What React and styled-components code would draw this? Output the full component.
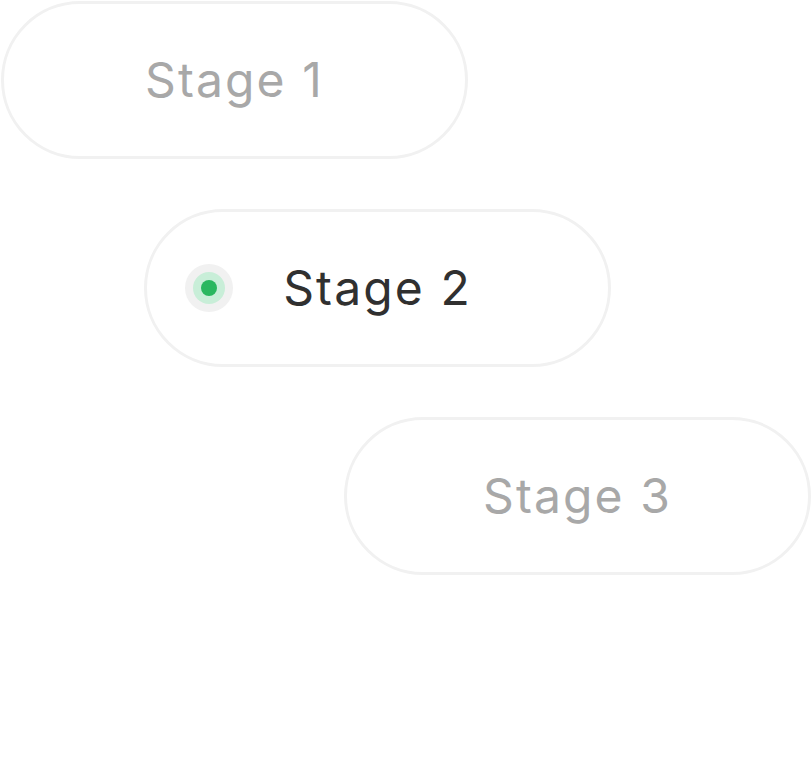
import React from 'react';
import styled, { createGlobalStyle } from 'styled-components';

const GlobalStyle = createGlobalStyle`
  body {
    margin: 0;
    background: #ffffff;
    font-family: Inter, "Liberation Sans", sans-serif;
  }
`

const StageList = styled.div`
  display: flex;
  flex-direction: column;
  gap: 50px;
  padding-top: 1px;
`

const Pill = styled.div`
  position: relative;
  box-sizing: border-box;
  width: 467px;
  height: 158px;
  margin-left: ${props => props.offset}px;
  border: 3px solid #f1f1f1;
  border-radius: 79px;
  display: flex;
  align-items: center;
  justify-content: center;
`

const Label = styled.span`
  font-size: 48px;
  font-weight: 400;
  letter-spacing: 2.1px;
  line-height: 1;
  color: ${props => (props.active ? '#303030' : '#a8a8a8')};
`

const Dot = styled.span`
  position: absolute;
  left: 38px;
  top: 50%;
  width: 48px;
  height: 48px;
  margin-top: -24px;
  border-radius: 50%;
  background: #f1f1f1;
  display: flex;
  align-items: center;
  justify-content: center;
`

const DotRing = styled.span`
  width: 32px;
  height: 32px;
  border-radius: 50%;
  background: #c8eed8;
  display: flex;
  align-items: center;
  justify-content: center;
`

const DotCore = styled.span`
  width: 16px;
  height: 16px;
  border-radius: 50%;
  background: #29b75f;
`

const stages = [
  { name: 'Stage 1', offset: 1 },
  { name: 'Stage 2', offset: 144, active: true },
  { name: 'Stage 3', offset: 344 },
];

export default function App() {
  return (
    <>
      <GlobalStyle />
      <StageList>
        {stages.map(stage => (
          <Pill key={stage.name} offset={stage.offset}>
            {stage.active && (
              <Dot>
                <DotRing>
                  <DotCore />
                </DotRing>
              </Dot>
            )}
            <Label active={stage.active}>{stage.name}</Label>
          </Pill>
        ))}
      </StageList>
    </>
  );
}
